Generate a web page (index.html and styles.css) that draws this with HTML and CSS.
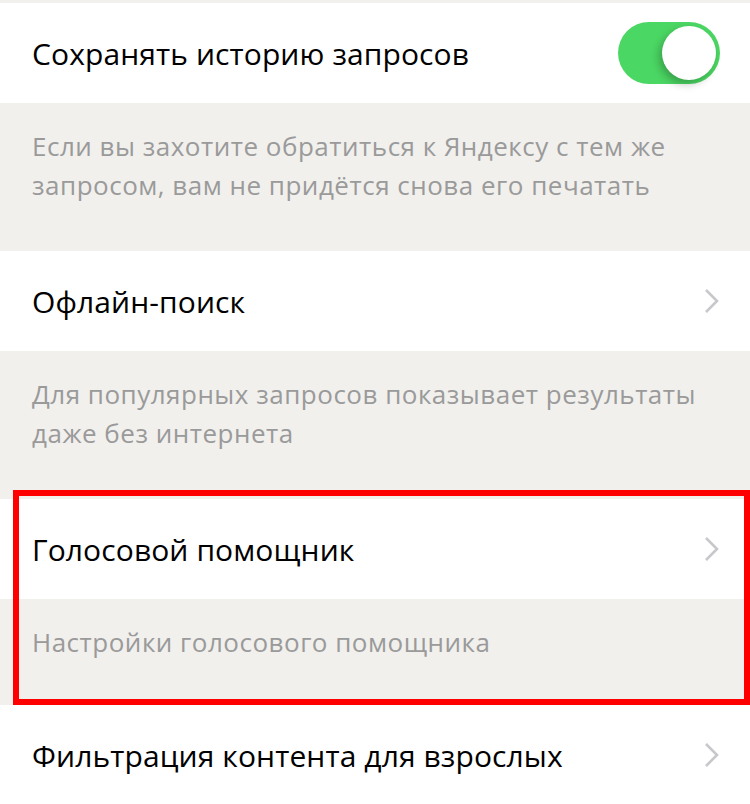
FILE: index.html
```html
<!DOCTYPE html>
<html lang="ru">
<head>
    <meta charset="UTF-8">
    <meta name="viewport" content="width=device-width, initial-scale=1.0">
    <title>Настройки поиска</title>
    <link rel="stylesheet" href="styles.css">
</head>
<body>
    <div class="settings">
        <div class="row">
            <span class="row-title">Сохранять историю запросов</span>
            <span class="toggle on"><span class="knob"></span></span>
        </div>
        <div class="hint hint-tall">Если вы захотите обратиться к Яндексу с тем же запросом, вам не придётся снова его печатать</div>

        <div class="row">
            <span class="row-title">Офлайн-поиск</span>
            <svg class="chevron" viewBox="0 0 16 26"><path d="M2 2l11 11L2 24"/></svg>
        </div>
        <div class="hint hint-tall">Для популярных запросов показывает результаты даже без интернета</div>

        <div class="group highlighted">
            <div class="row">
                <span class="row-title">Голосовой помощник</span>
                <svg class="chevron" viewBox="0 0 16 26"><path d="M2 2l11 11L2 24"/></svg>
            </div>
            <div class="hint">Настройки голосового помощника</div>
        </div>

        <div class="row">
            <span class="row-title">Фильтрация контента для взрослых</span>
            <svg class="chevron" viewBox="0 0 16 26"><path d="M2 2l11 11L2 24"/></svg>
        </div>
    </div>
</body>
</html>
```

FILE: styles.css
```css
body {
    margin: 0;
    background-color: #f1f0ed;
    font-family: "Open Sans", "Noto Sans", sans-serif;
}

.settings {
    padding-top: 3px;
    width: 750px;
}

.row {
    height: 100px;
    background-color: #fff;
    display: flex;
    align-items: center;
    justify-content: space-between;
    padding: 0 30px 0 32px;
    box-sizing: border-box;
}

.row-title {
    font-size: 30px;
    color: #000;
    letter-spacing: 0.1px;
}

.hint {
    background-color: #f1f0ed;
    color: #9a9a9a;
    font-size: 26px;
    line-height: 39px;
    letter-spacing: 0.5px;
    padding: 24px 14px 43px 32px;
}

.hint-tall {
    height: 148px;
    box-sizing: border-box;
    padding-bottom: 0;
}

.toggle {
    width: 102px;
    height: 62px;
    border-radius: 31px;
    background-color: #4bd763;
    display: flex;
    align-items: center;
    justify-content: flex-end;
    padding-right: 4px;
    box-sizing: border-box;
}

.knob {
    width: 54px;
    height: 54px;
    border-radius: 50%;
    background-color: #fff;
    box-shadow: -3px 4px 8px rgba(0,0,0,0.25);
}

.chevron {
    width: 16px;
    height: 26px;
    fill: none;
    stroke: #c8c8cc;
    stroke-width: 2.6;
}

.group {
    position: relative;
}

.highlighted::after {
    content: "";
    position: absolute;
    left: 13px;
    right: 0;
    top: -9px;
    bottom: 0;
    border: 6px solid #ff0000;
    pointer-events: none;
}
```
